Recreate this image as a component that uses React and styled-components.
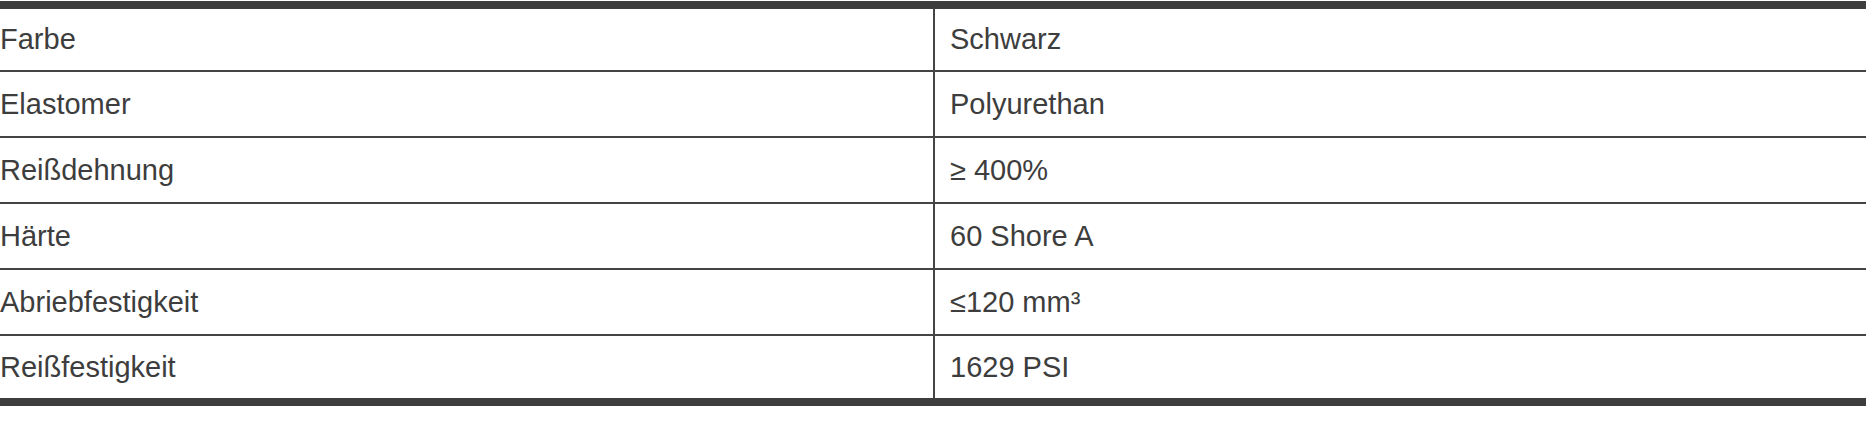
import React from 'react'
import styled, { createGlobalStyle } from 'styled-components'

const GlobalStyle = createGlobalStyle`
  body {
    margin: 0;
    background: #ffffff;
    font-family: "Liberation Sans", Arial, sans-serif;
  }
`

const SpecTable = styled.table`
  width: 100%;
  margin-top: 1px;
  border-collapse: collapse;
  table-layout: fixed;
  border-top: 8px solid #3d3d3d;
  border-bottom: 8px solid #3d3d3d;
  color: #3d3d3d;
  font-size: 29px;
`

const Row = styled.tr`
  & + & td {
    border-top: 2px solid #444444;
  }

  &:first-child td {
    height: 61px;
  }

  &:last-child td {
    height: 62px;
  }
`

const Cell = styled.td`
  height: 64px;
  padding: 0 0 0 ${(p) => (p.$value ? '15px' : '0')};
  vertical-align: middle;
  border-left: ${(p) => (p.$value ? '2px solid #444444' : 'none')};
  width: ${(p) => (p.$value ? 'auto' : '50%')};
`

const specs = [
  { label: 'Farbe', value: 'Schwarz' },
  { label: 'Elastomer', value: 'Polyurethan' },
  { label: 'Reißdehnung', value: '≥ 400%' },
  { label: 'Härte', value: '60 Shore A' },
  { label: 'Abriebfestigkeit', value: '≤120 mm³' },
  { label: 'Reißfestigkeit', value: '1629 PSI' },
]

const App = () => {
  return (
    <>
      <GlobalStyle />
      <SpecTable>
        <tbody>
          {specs.map((spec) => (
            <Row key={spec.label}>
              <Cell>{spec.label}</Cell>
              <Cell $value>{spec.value}</Cell>
            </Row>
          ))}
        </tbody>
      </SpecTable>
    </>
  )
}

export default App
